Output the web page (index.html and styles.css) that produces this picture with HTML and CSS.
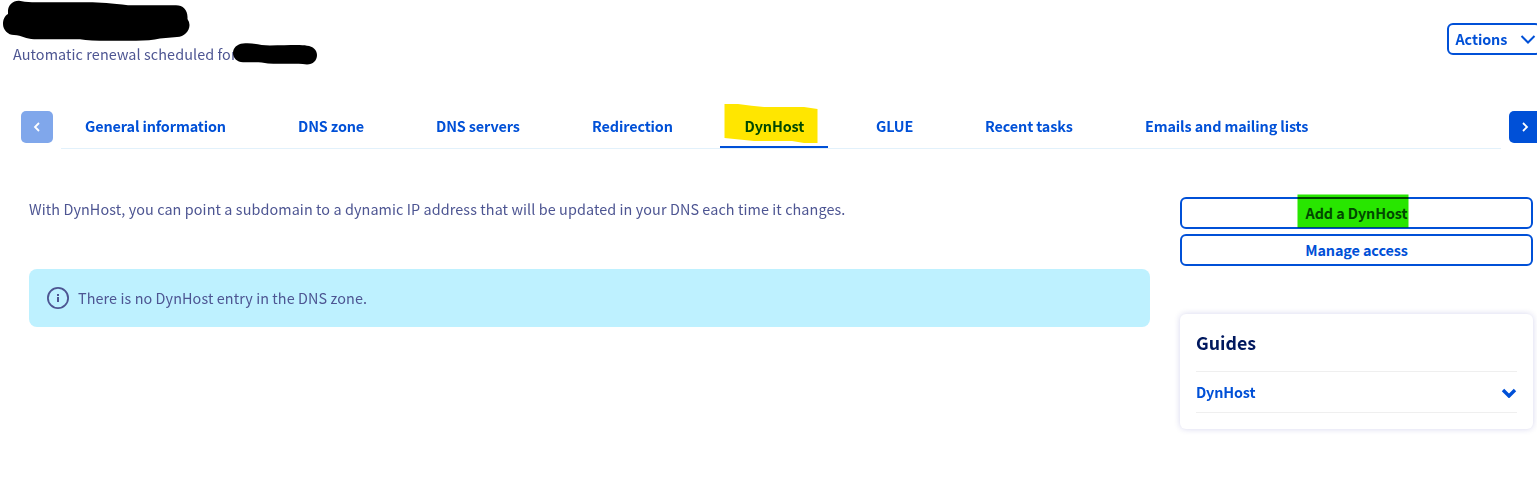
FILE: index.html
```html
<!DOCTYPE html>
<html lang="en">
<head>
<meta charset="utf-8">
<title>DynHost</title>
<link rel="stylesheet" href="styles.css">
</head>
<body>
<div class="page">
  <header class="header">
    <div class="identity">
      <p class="renewal">Automatic renewal scheduled for</p>
      <svg class="redaction" width="330" height="80" viewBox="0 0 330 80"><path d="M19 .7C13 .5 8 5 8 11V14C4.500 16 3 20 3 24C3 30 8 35 14 35C22 35.500 26 39 34 39.200H80Q90 40.700 108 40.700H136Q150 40.700 160 38.500L177 37C184 37 189.500 31 189.500 25Q189.500 22 187.500 19V17C187.500 10 183 5.300 176 5.300H128C112 3.500 100 2.300 88 2.300H32Q24 2 19 .7Z"/><path d="M243 43.500C254 42.500 260 45.500 270 45.500C286 45.500 300 44.500 307 45.700C313 46 317 50 317 55C317 60.500 313 64.500 307 64.500C292 63 280 64.500 268 63.500C260 61.500 252 62.500 243 62.300C237 62 233 58 233 53C233 48 237 44 243 43.500Z"/></svg>
    </div>
    <button class="actions"><span>Actions</span><svg width="16" height="10" viewBox="0 0 16 10"><path d="M1.500 2L8 8.500L14.500 2"/></svg></button>
  </header>

  <nav class="tabbar">
    <button class="arrow arrow-off" aria-label="Previous"><svg width="8" height="12" viewBox="0 0 8 12"><path d="M6 2L2 6L6 10"/></svg></button>
    <div class="tabs">
      <a class="tab general">General information</a>
      <a class="tab zone">DNS zone</a>
      <a class="tab servers">DNS servers</a>
      <a class="tab redirection">Redirection</a>
      <a class="tab dynhost">DynHost<svg class="marker marker-tab" width="94" height="40" viewBox="0 0 94 40"><path d="M.5 0H14Q28 2 40 3H80L93.500 5V39H80L68 37H30L.5 34Z"/></svg></a>
      <a class="tab glue">GLUE</a>
      <a class="tab tasks">Recent tasks</a>
      <a class="tab emails">Emails and mailing lists</a>
    </div>
    <button class="arrow arrow-next" aria-label="Next"><svg width="8" height="12" viewBox="0 0 8 12"><path d="M2 2L6 6L2 10"/></svg></button>
  </nav>

  <main class="content">
    <section class="main-column">
      <p class="intro">With DynHost, you can point a subdomain to a dynamic IP address that will be updated in your DNS each time it changes.</p>
      <div class="notice">
        <svg width="24" height="24" viewBox="0 0 24 24"><circle cx="12" cy="12" r="10.100"/><path d="M11 8h2v2h-2zM11 11h2v5h-2z"/></svg>
        <span class="notice-text">There is no DynHost entry in the DNS zone.</span>
      </div>
    </section>
    <aside class="side">
      <button class="outline add"><span class="add-text">Add a DynHost</span><svg class="marker marker-add" width="112" height="34" viewBox="0 0 112 34"><path d="M.5 .5H111.500V33.500H.5Z"/></svg></button>
      <button class="outline"><span class="manage-text">Manage access</span></button>
      <section class="guides">
        <h2 class="guides-title">Guides</h2>
        <div class="guide-row"><span class="guide-text">DynHost</span><svg width="16" height="11" viewBox="0 0 16 11"><path d="M2 3L8 9L14 3"/></svg></div>
      </section>
    </aside>
  </main>
</div>
</body>
</html>
```
FILE: styles.css
```css
* { box-sizing: border-box; }
body {
  margin: 0;
  background: #fff;
  color: #4d5592;
  font: 14.4px/24px "Noto Sans CJK SC", "Open Sans", sans-serif;
  letter-spacing: .085px;
  overflow: hidden;
}
p, h2 { margin: 0; }
button { font: inherit; margin: 0; padding: 0; }
svg { display: block; flex: none; }
.page { width: 1541px; height: 478px; overflow: hidden; }

.header { height: 111px; display: flex; justify-content: space-between; }
.identity { position: relative; padding: 42px 0 0 13px; }
.renewal { white-space: nowrap; }
.redaction { position: absolute; left: 0; top: 0; fill: #000; }
.actions {
  margin-top: 23px;
  width: 94px;
  height: 32px;
  display: flex;
  align-items: center;
  gap: 12px;
  padding-left: 6.5px;
  border: 2px solid #0050d7;
  border-radius: 6px;
  background: #fff;
  color: #0050d7;
  font-weight: 700;
  letter-spacing: -.1px;
}
.actions span { width: 52px; text-align: left; white-space: nowrap; }
.actions svg, .guide-row svg { fill: none; stroke: #0050d7; stroke-width: 2; }

.tabbar { display: flex; height: 38px; padding-left: 21px; }
.arrow {
  width: 32px;
  height: 32px;
  display: flex;
  align-items: center;
  justify-content: center;
  border: 0;
  border-radius: 5px;
  background: #0050d7;
}
.arrow svg { fill: none; stroke: #fff; stroke-width: 1.8; }
.arrow-off { background: #80a7eb; }
.tabs {
  width: 1440px;
  margin: 0 8px;
  display: flex;
  gap: 24px;
  border-bottom: 1px solid #e2f1fb;
}
.tab {
  height: 37px;
  padding: 3px 0 0 24px;
  color: #0050d7;
  font-weight: 700;
  letter-spacing: -.12px;
  white-space: nowrap;
}
.general { width: 189px; }
.zone { width: 114px; }
.servers { width: 132px; }
.redirection { width: 128px; }
.dynhost { width: 108px; position: relative; padding-left: 24.5px; border-bottom: 2px solid #0050d7; }
.glue { width: 85px; }
.tasks { width: 136px; }
.emails { width: 212px; }
.marker { position: absolute; mix-blend-mode: multiply; }
.marker-tab { left: 4px; top: -7px; fill: #ffe600; }
.marker-add { left: 115px; top: -5px; fill: #28e600; }

.content { display: flex; gap: 30px; padding: 48px 0 0 29px; }
.main-column { width: 1121px; }
.intro { white-space: nowrap; }
.notice {
  height: 58px;
  margin-top: 48px;
  padding-left: 17px;
  display: flex;
  align-items: center;
  gap: 8px;
  border-radius: 8px;
  background: #bef1ff;
}
.notice circle { fill: none; stroke: #4d5592; stroke-width: 1.8; }
.notice path { fill: #4d5592; }
.side { width: 353px; display: flex; flex-direction: column; gap: 5px; }
.outline {
  position: relative;
  height: 32px;
  border: 2px solid #0050d7;
  border-radius: 6px;
  background: #fff;
  color: #0050d7;
  font-weight: 700;
  letter-spacing: -.1px;
}
.guides {
  height: 115px;
  margin-top: 43px;
  padding: 0 16px;
  border-radius: 6px;
  box-shadow: 0 0 6px rgba(0, 0, 150, .17);
}
.guides-title {
  height: 57px;
  padding-top: 16px;
  color: #00185e;
  font-size: 17.8px;
  line-height: 24px;
  letter-spacing: 0;
}
.guide-row {
  height: 42px;
  display: flex;
  align-items: center;
  justify-content: space-between;
  border: solid #efefef;
  border-width: 1px 0;
  color: #0050d7;
  font-weight: 700;
  letter-spacing: -.15px;
}
.guide-row svg { stroke-width: 3.4; }
```
